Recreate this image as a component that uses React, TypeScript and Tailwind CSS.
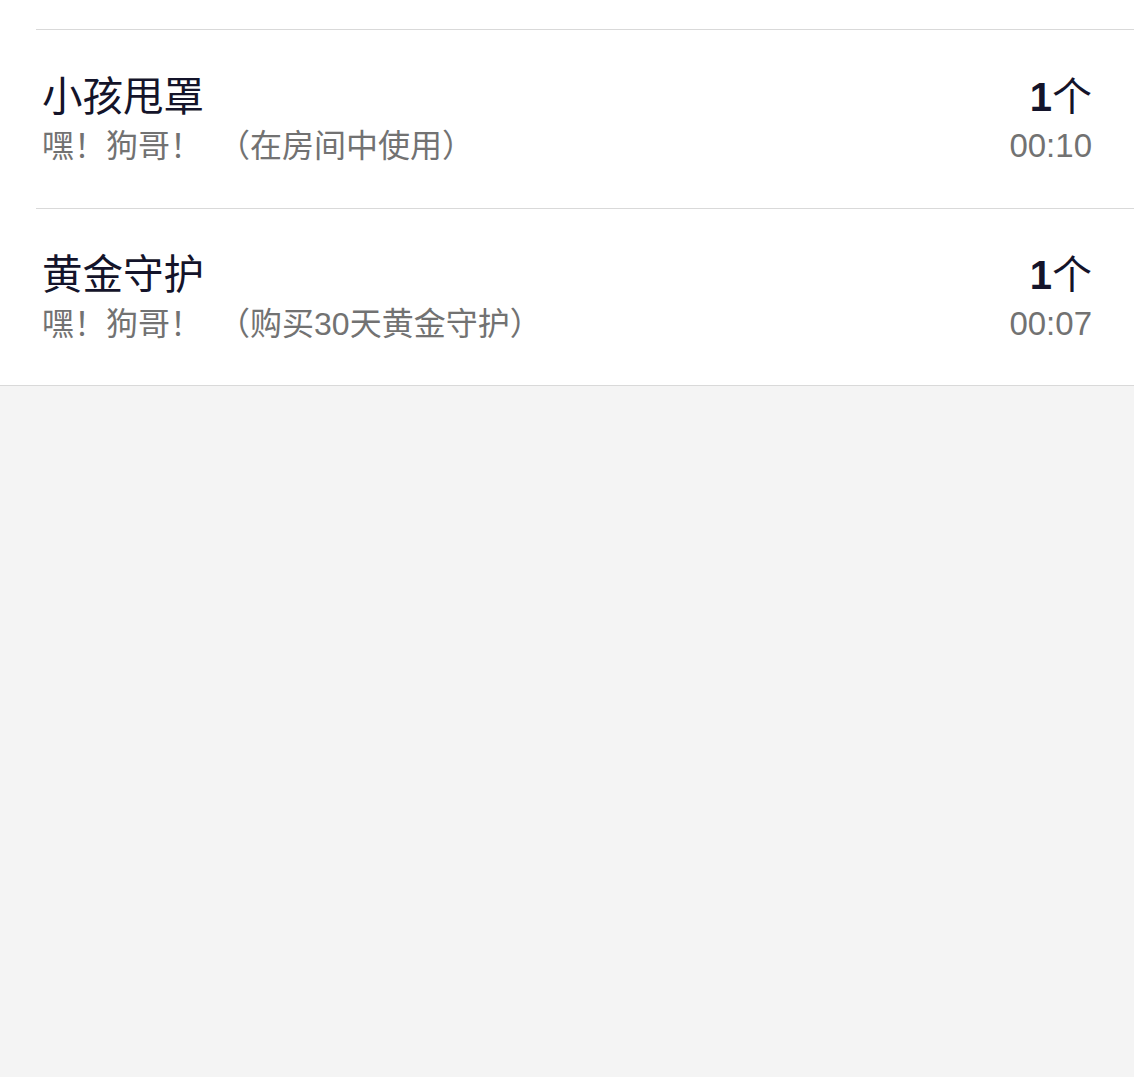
import React from 'react';

interface GiftRecord {
    name: string;
    sender: string;
    note: string;
    count: number;
    time: string;
}

const records: GiftRecord[] = [
    { name: '小孩甩罩', sender: '嘿！狗哥！', note: '（在房间中使用）', count: 1, time: '00:10' },
    { name: '黄金守护', sender: '嘿！狗哥！', note: '（购买30天黄金守护）', count: 1, time: '00:07' },
];

const font = { fontFamily: '"Liberation Sans", "Noto Sans CJK SC", sans-serif' };

const App: React.FC = () => (
    <div className="min-h-[1077px] bg-[#f4f4f4]" style={font}>
        <div className="bg-white pt-[29px] border-b border-[#d9d9d9]">
            {records.map((r, i) => (
                <div
                    key={r.name}
                    className={`ml-[36px] border-t border-[#d9d9d9] pl-[6px] pr-[42px] flex items-center justify-between ${i === 0 ? 'h-[179px]' : 'h-[177px]'}`}
                >
                    <div className="flex flex-col">
                        <div className="text-[40.5px] leading-[48px] text-[#14142a]">{r.name}</div>
                        <div className="mt-[5px] text-[32px] leading-[40px] text-[#727272] whitespace-pre">
                            {r.sender}　{r.note}
                        </div>
                    </div>
                    <div className="flex flex-col items-end">
                        <div className="text-[40px] leading-[48px] text-[#14142a]">
                            <span className="font-semibold">{r.count}</span>个
                        </div>
                        <div className="mt-[5px] text-[33px] leading-[40px] text-[#727272]">{r.time}</div>
                    </div>
                </div>
            ))}
        </div>
    </div>
);

export default App;
